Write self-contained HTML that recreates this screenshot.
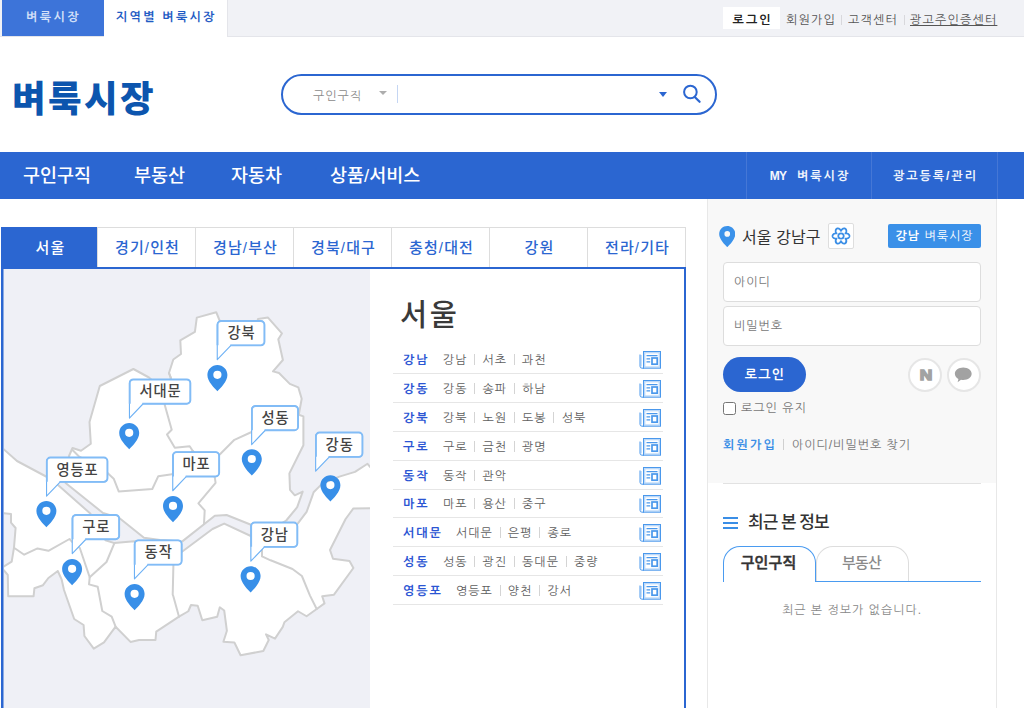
<!DOCTYPE html>
<html lang="ko">
<head>
<meta charset="utf-8">
<title>벼룩시장</title>
<style>
*{box-sizing:border-box;margin:0;padding:0}
html,body{width:1024px;height:708px;overflow:hidden;background:#fff}
body{font-family:"Liberation Sans","NanumGothic","Noto Sans CJK KR",sans-serif;font-size:12px;color:#333;position:relative}
.noto{font-family:"Liberation Sans","Noto Sans CJK KR",sans-serif}
.abs{position:absolute}
/* top bar */
#topbar{position:absolute;left:0;top:0;width:1024px;height:37px;background:#f1f2f6;border-bottom:1px solid #e4e5ea}
#topbar .t1{position:absolute;left:2px;top:0;width:102px;height:36px;background:#3d74d9;color:#d4e0f8;font-size:12px;font-weight:bold;line-height:35px;letter-spacing:2.5px;padding-left:24px;white-space:nowrap}
#topbar .t2{position:absolute;left:104px;top:0;width:124px;height:37px;border-right:1px solid #e4e5ea;background:#fff;color:#1f5bc4;font-size:12px;font-weight:bold;line-height:35px;letter-spacing:2.3px;padding-left:12px;white-space:nowrap}
#topbar .login{position:absolute;left:723px;top:7px;width:57px;height:22px;background:#fff;color:#222;font-weight:bold;font-size:12px;line-height:26px;letter-spacing:2.1px;padding-left:9.5px;white-space:nowrap}
#topbar .lnk{position:absolute;top:9px;height:22px;line-height:22px;font-size:12px;color:#555;white-space:nowrap;letter-spacing:1.2px}
#topbar .dv{position:absolute;top:15px;width:1px;height:10px;background:#d8d8dc}
/* header */
#logo{position:absolute;left:12px;top:72px;font-family:"Liberation Sans","Noto Sans CJK KR",sans-serif;font-weight:900;font-size:36.5px;line-height:56px;color:#0c55ae;letter-spacing:2.4px;white-space:nowrap}
#search{position:absolute;left:281px;top:74px;width:436px;height:41px;border:2px solid #2b66d1;border-radius:21px;background:#fff}
/* nav */
#nav{position:absolute;left:0;top:152px;width:1024px;height:47px;background:#2b66d1}
#nav .m{position:absolute;top:0;height:47px;line-height:48px;color:#fff;font-family:"Liberation Sans","Noto Sans CJK KR",sans-serif;font-size:18.5px;font-weight:500;white-space:nowrap;letter-spacing:0px}
#nav .r{position:absolute;top:0;height:47px;line-height:48px;color:#f2f6fd;font-size:12px;font-weight:bold;text-align:center;border-left:1px solid #4577d6;letter-spacing:2px;padding-left:2px;white-space:nowrap}

/* region tabs */
#rtabs{position:absolute;left:1px;top:227px;width:685px;height:42px;border-bottom:2px solid #2b66d1}
#rtabs .t{position:absolute;top:0;height:40px;line-height:40px;text-align:center;font-family:"Liberation Sans","Noto Sans CJK KR",sans-serif;font-size:15px;font-weight:500;color:#2b66d1;background:#fff;border:1px solid #ddd;border-bottom:none;letter-spacing:1.1px;padding-left:2px}
#rtabs .t.on{background:#2b66d1;color:#fff;border-color:#2b66d1}
#panel{position:absolute;left:1px;top:267px;width:685px;height:460px;border:2px solid #2b66d1;background:#fff}
#map{position:absolute;left:3px;top:269px;width:367px;height:439px;background:#eff0f6;overflow:hidden;border-left:1px solid #8dabe3}
#rlist h2{position:absolute;left:400px;top:293px;font-family:"Liberation Sans","Noto Sans CJK KR",sans-serif;font-size:29.5px;font-weight:500;color:#3a3a3a;line-height:44px;letter-spacing:2.5px}
.row{position:absolute;left:393px;width:270px;height:29px;border-bottom:1px solid #e6e6e6;line-height:30px;font-size:12px;color:#5e5e5e;white-space:nowrap;letter-spacing:1px}
.row b{position:absolute;left:10px;top:0;color:#2b55d3;font-weight:bold;letter-spacing:2px}
.row span.s{position:absolute;top:0}
.row i{display:inline-block;width:1px;height:11px;background:#d4d4d4;margin:0 7.2px 0 6.8px;vertical-align:-1px;font-size:0;overflow:hidden}
.row svg{position:absolute;right:2px;top:6px}
/* sidebar */
#side{position:absolute;left:707px;top:199px;width:290px;height:520px;border:1px solid #e8e8e8;border-top:none;background:#fff}
#side>*{margin-left:-1px}
#side .g{margin-left:0;position:absolute;left:0;top:0;width:288px;height:284px;background:#f8f8f8}

#search .sel{position:absolute;left:30px;top:0;height:37px;line-height:40px;font-size:12px;color:#8a8a8a;white-space:nowrap;letter-spacing:1px}
#search .car1{position:absolute;left:96px;top:15.200px;width:0;height:0;border-left:4.200px solid transparent;border-right:4.200px solid transparent;border-top:4.700px solid #adadad}
#search .bar{position:absolute;left:114px;top:9px;width:1px;height:18px;background:#c5d6f3}
#search .car2{position:absolute;left:375.5px;top:16px;width:0;height:0;border-left:4px solid transparent;border-right:4px solid transparent;border-top:5px solid #2b66d1}
#search svg{position:absolute;left:398px;top:8px}
#side .loc{position:absolute;left:35px;top:27px;font-family:"Liberation Sans","Noto Sans CJK KR",sans-serif;font-size:16px;line-height:24px;color:#333;white-space:nowrap;letter-spacing:0.1px}
#side .gear{position:absolute;left:121px;top:24px;width:26px;height:26px;border:1px solid #dedede;border-radius:2px;background:#fff}
#side .gbtn{position:absolute;left:181px;top:25px;width:93px;height:24px;background:#3a90e8;border-radius:2px;color:#fff;font-size:12px;line-height:24px;text-align:center;white-space:nowrap;letter-spacing:1px}
#side .inp{position:absolute;left:16px;width:258px;height:40px;border:1px solid #ddd;border-radius:4px;background:#fff;font-size:12px;line-height:38px;color:#777;padding-left:10px;letter-spacing:1px}
#side .lbtn{position:absolute;left:16px;top:158px;width:83px;height:35px;border-radius:18px;background:#2b66d1;color:#fff;font-size:13px;font-weight:bold;line-height:36px;text-align:center;letter-spacing:1.2px;padding-left:1px}
#side .circ{position:absolute;top:158.5px;width:34px;height:34px;border-radius:50%;background:#fff;border:2px solid #e6e6e6}
#side .circ b{position:absolute;left:1px;top:0;width:30px;height:30px;line-height:29.5px;text-align:center;font-family:"Liberation Sans",sans-serif;font-weight:bold;font-size:15.5px;color:#a2a2a2;-webkit-text-stroke:1.5px #a2a2a2;transform:scaleX(1.12)}
#side .chk{position:absolute;left:16px;top:203px;width:13px;height:13px;border:1px solid #767676;border-radius:2.5px;background:#fff}
#side .keep{position:absolute;left:34px;top:199px;line-height:20px;font-size:12px;color:#777;letter-spacing:1px;white-space:nowrap}
#side .links{position:absolute;left:16px;top:236px;line-height:20px;font-size:12px;color:#777;letter-spacing:1px;white-space:nowrap}
#side .links b{color:#3a8ee6;letter-spacing:2.2px}
#side .links i{display:inline-block;width:1px;height:11px;background:#d0d0d0;margin:0 8px 0 6px;vertical-align:-1px;font-size:0;overflow:hidden}
#side .hr{position:absolute;left:16px;top:284px;width:258px;height:1px;background:#e2e2e2}
#side .ham{position:absolute;left:16px;top:318px;width:15px;height:12.400px;border-top:2px solid #3a8ee6;border-bottom:2px solid #3a8ee6}
#side .ham:after{content:"";position:absolute;left:0;top:3.200px;width:15px;height:2px;background:#3a8ee6}
#side .rt{position:absolute;left:41px;top:311px;font-family:"Liberation Sans","Noto Sans CJK KR",sans-serif;font-size:17px;font-weight:500;line-height:26px;color:#333;white-space:nowrap;letter-spacing:-1px}
#side .tb{position:absolute;top:347px;height:36px;border:1px solid #ddd;border-bottom:none;border-radius:17px 17px 0 0;font-family:"Liberation Sans","Noto Sans CJK KR",sans-serif;font-size:15px;font-weight:500;line-height:32px;text-align:center;color:#8a8a8a;background:#fff;letter-spacing:-0.8px;padding-right:2px}
#side .tb.on{border-color:#4a9bf0;color:#333;font-weight:500;-webkit-text-stroke:0.45px #333;letter-spacing:0.1px;padding-right:2px}
#side .tline{position:absolute;left:109px;top:382px;width:165px;height:1px;background:#4a9bf0}
#side .none{position:absolute;left:16px;top:401px;width:258px;text-align:center;font-size:12px;line-height:20px;color:#888;letter-spacing:1px}
</style>
</head>
<body>
<div id="topbar">
  <div class="t1">벼룩시장</div>
  <div class="t2">지역별 벼룩시장</div>
  <div class="login">로그인</div>
  <div class="lnk" style="left:786px">회원가입</div><div class="dv" style="left:841px"></div>
  <div class="lnk" style="left:848px">고객센터</div><div class="dv" style="left:904px"></div>
  <div class="lnk" style="left:910px;text-decoration:underline">광고주인증센터</div>
</div>
<div id="logo">벼룩시장</div>
<div id="search">
  <div class="sel">구인구직</div><div class="car1"></div><div class="bar"></div><div class="car2"></div>
  <svg width="24" height="24" viewBox="0 0 24 24"><circle cx="9.4" cy="8" r="6.3" fill="none" stroke="#2b66d1" stroke-width="2"/><path d="M14 13.200L18.600 17.800" stroke="#2b66d1" stroke-width="2.200" stroke-linecap="round"/></svg>
</div>
<div id="nav">
  <div class="m" style="left:23px">구인구직</div>
  <div class="m" style="left:134px">부동산</div>
  <div class="m" style="left:231px">자동차</div>
  <div class="m" style="left:330px">상품/서비스</div>
  <div class="r" style="left:746px;width:125px"><span style="letter-spacing:-0.8px;font-size:12px;margin-right:5.500px">MY</span> 벼룩시장</div>
  <div class="r" style="left:871px;width:126px">광고등록/관리</div>
  <div class="r" style="left:997px;width:27px"></div>
</div>
<div id="rtabs">
  <div class="t on" style="left:0px;width:97px">서울</div>
  <div class="t" style="left:96px;width:99px">경기/인천</div>
  <div class="t" style="left:194px;width:99px">경남/부산</div>
  <div class="t" style="left:292px;width:99px">경북/대구</div>
  <div class="t" style="left:390px;width:99px">충청/대전</div>
  <div class="t" style="left:488px;width:99px">강원</div>
  <div class="t" style="left:586px;width:99px">전라/기타</div>
</div>
<div id="panel"></div>
<div id="map">
<svg id="mapsvg" width="366" height="439" viewBox="4 269 366 439" style="position:absolute;left:0;top:0">
<g fill="#fff" stroke="#d0d0d0" stroke-width="2" stroke-linejoin="round">
<polygon points="72.5,448 81,450.8 90.8,443.8 89.5,422 99.8,386 133.4,369 149,377.5 155,383 168,383 171,378.3 169,373 173.3,359.5 181,354 180.3,340.3 194.9,331.8 196.8,317.6 216.2,312.2 219.6,320.5 222,327 256,327 258,319 268,317.6 281.9,333.4 278.3,339.3 282.9,360 273,371.4 279,373 289.8,383.9 298.3,387.4 301.7,398.7 298.75,414.8 303.4,416.4 303.4,445.3 289.4,473.4 290,489.8 294.8,495.3 302.7,491.6 297.2,507.2 286.25,520.5 270,530 251.6,525 226.6,515 214.8,515.8 182,541.6 160,540 144,537.7 119.3,518 103,513 65.6,483 69,456"/>
<polygon points="0,446 17,461 47,477 57.7,484.8 90.3,513.5 105.5,540.2 114.4,543.1 134.2,541.2 160,551 182,551.7 212.5,529 224.2,523.6 250.8,536 280,535 297.7,523.6 306.6,511.9 312.8,494.7 313.6,492.2 322.2,483.6 339.4,476.6 355,471.9 367.5,463.75 370,467 380,467 380,508 353.4,508.4 345.6,519 330,550 333,558.75 349.5,561 353.4,568 334,594.7 322.2,596.25 324.5,603.4 316.7,609 306.6,616.25 298,611.25 284.4,622.2 282.8,626.9 275,638.6 266,634.4 268.75,640 263.3,651 240.6,655.3 234.4,642.5 223.4,641.7 226.9,630.8 224.2,610.5 219.8,607.3 217.2,616.7 202.3,620.3 197.7,605.8 191,605 188.3,611.25 179,616.7 156.25,631.6 155.5,640 139,640 130.5,641.9 115.6,626.7 104,642.3 93.75,648.6 84.4,636 83.6,625 74.2,619 64,590 61.7,579.7 57.8,571 48.4,578 43,585.2 34.4,588.3 33.6,596.25 8.2,596.25 7.8,575 4,570.3 -4,570 -4,566.4 4,566.4 11.7,561.7 14,547.7 15.6,528 11,522.7 11,514 4,513.3 -4,513"/>
</g>
<g fill="none" stroke="#d0d0d0" stroke-width="2" stroke-linejoin="round" stroke-linecap="round">
<polyline points="169,373 171,378.3 164.7,404.8 171.7,429.8 167,434.5 174.8,447.8 189.7,446.25 192.8,451 205,465"/>
<polyline points="205,465 219.5,454.7 234.4,439.8 251.6,432 298.75,414.8"/>
<polyline points="205,465 214.8,477.3 215.6,482.8 198.4,503.3 204.7,510.3 204,524"/>
<polyline points="72.5,450 78.5,456 107.8,473.2 113.7,478.7 118.7,491.4 152.3,489 158.3,476.2 172,474.2 192.8,451"/>
<polyline points="14,547.7 24.2,554.7 37.5,548.4 48.4,550.8 69.5,539 71.9,541.6 79.8,548 89.7,577.3 89,584.4 97.7,586.7 102.3,611 111.7,616.6 115.6,626.7"/>
<polyline points="114.4,543.1 106.5,562 89.7,577.3"/>
<polyline points="180,552.5 173.4,565 172.7,594.7 173.4,596.4 179,616.7"/>
<polyline points="262,540 262,556.4 270.6,560.3 292.5,569 301.9,576 310,595.6 316.7,609"/>
</g>
<g fill="#388fe8">
<path transform="translate(207.4 365)" fill-rule="evenodd" d="M10 0C4.5 0 0 4.4 0 9.9c0 3.2 1.6 6.3 4 9.6 2.2 3 4.8 5.6 6 6.7 1.2-1.1 3.800-3.700 6-6.700 2.400-3.300 4-6.400 4-9.600C20 4.400 15.500 0 10 0zm0 5.700a4.100 4.100 0 1 1 0 8.200 4.100 4.100 0 0 1 0-8.200z"/>
<path transform="translate(119.2 423)" fill-rule="evenodd" d="M10 0C4.5 0 0 4.4 0 9.9c0 3.2 1.6 6.3 4 9.6 2.2 3 4.8 5.6 6 6.7 1.2-1.1 3.800-3.700 6-6.700 2.400-3.300 4-6.400 4-9.600C20 4.400 15.500 0 10 0zm0 5.700a4.100 4.100 0 1 1 0 8.200 4.100 4.100 0 0 1 0-8.200z"/>
<path transform="translate(241.8 449.2)" fill-rule="evenodd" d="M10 0C4.5 0 0 4.4 0 9.9c0 3.2 1.6 6.3 4 9.6 2.2 3 4.8 5.6 6 6.7 1.2-1.1 3.800-3.700 6-6.700 2.400-3.300 4-6.400 4-9.600C20 4.400 15.500 0 10 0zm0 5.700a4.100 4.100 0 1 1 0 8.200 4.100 4.100 0 0 1 0-8.200z"/>
<path transform="translate(320.4 475.3)" fill-rule="evenodd" d="M10 0C4.5 0 0 4.4 0 9.9c0 3.2 1.6 6.3 4 9.6 2.2 3 4.8 5.6 6 6.7 1.2-1.1 3.800-3.700 6-6.700 2.400-3.300 4-6.400 4-9.600C20 4.400 15.500 0 10 0zm0 5.700a4.100 4.100 0 1 1 0 8.200 4.100 4.100 0 0 1 0-8.200z"/>
<path transform="translate(36.4 501)" fill-rule="evenodd" d="M10 0C4.5 0 0 4.4 0 9.9c0 3.2 1.6 6.3 4 9.6 2.2 3 4.8 5.6 6 6.7 1.2-1.1 3.800-3.700 6-6.700 2.400-3.300 4-6.400 4-9.600C20 4.400 15.500 0 10 0zm0 5.700a4.100 4.100 0 1 1 0 8.200 4.100 4.100 0 0 1 0-8.200z"/>
<path transform="translate(163 496.1)" fill-rule="evenodd" d="M10 0C4.5 0 0 4.4 0 9.9c0 3.2 1.6 6.3 4 9.6 2.2 3 4.8 5.6 6 6.7 1.2-1.1 3.800-3.700 6-6.700 2.400-3.300 4-6.400 4-9.600C20 4.400 15.500 0 10 0zm0 5.700a4.100 4.100 0 1 1 0 8.200 4.100 4.100 0 0 1 0-8.200z"/>
<path transform="translate(62.1 559)" fill-rule="evenodd" d="M10 0C4.5 0 0 4.4 0 9.9c0 3.2 1.6 6.3 4 9.6 2.2 3 4.8 5.6 6 6.7 1.2-1.1 3.800-3.700 6-6.700 2.400-3.300 4-6.400 4-9.600C20 4.400 15.500 0 10 0zm0 5.700a4.100 4.100 0 1 1 0 8.200 4.100 4.100 0 0 1 0-8.200z"/>
<path transform="translate(124.6 584)" fill-rule="evenodd" d="M10 0C4.5 0 0 4.4 0 9.9c0 3.2 1.6 6.3 4 9.6 2.2 3 4.8 5.6 6 6.7 1.2-1.1 3.800-3.700 6-6.700 2.400-3.300 4-6.400 4-9.600C20 4.400 15.500 0 10 0zm0 5.700a4.100 4.100 0 1 1 0 8.200 4.100 4.100 0 0 1 0-8.200z"/>
<path transform="translate(240.6 566.2)" fill-rule="evenodd" d="M10 0C4.5 0 0 4.4 0 9.9c0 3.2 1.6 6.3 4 9.6 2.2 3 4.8 5.6 6 6.7 1.2-1.1 3.800-3.700 6-6.700 2.400-3.300 4-6.400 4-9.600C20 4.400 15.500 0 10 0zm0 5.700a4.100 4.100 0 1 1 0 8.200 4.100 4.100 0 0 1 0-8.200z"/>
</g>
<g font-family="'Liberation Sans','Noto Sans CJK KR',sans-serif" font-size="14.300" font-weight="500" fill="#444" text-anchor="middle" letter-spacing="0.9">
<path d="M221.15 321.05H260.85a3.6 3.6 0 0 1 3.6 3.6V341.75a3.6 3.6 0 0 1 -3.6 3.6H230.95L217.25 359.65V324.65a3.6 3.6 0 0 1 3.6 -3.6z" fill="#fff" stroke="#6db1f5" stroke-width="1.1" stroke-linejoin="round"/>
<path d="M230.15 345.35H260.85a3.6 3.6 0 0 0 3.6 -3.6V324.65a3.6 3.6 0 0 0 -3.6 -3.6H221.15a3.6 3.6 0 0 0 -3.6 3.6V345.35" fill="none" stroke="#82bcf6" stroke-width="1.9"/>
<text x="241.45" y="338">강북</text>
<path d="M133.35 379.45H186.75a3.6 3.6 0 0 1 3.6 3.6V400.15a3.6 3.6 0 0 1 -3.6 3.6H143.15L129.45 418.05V383.05a3.6 3.6 0 0 1 3.6 -3.6z" fill="#fff" stroke="#6db1f5" stroke-width="1.1" stroke-linejoin="round"/>
<path d="M142.35 403.75H186.75a3.6 3.6 0 0 0 3.6 -3.6V383.05a3.6 3.6 0 0 0 -3.6 -3.6H133.35a3.6 3.6 0 0 0 -3.6 3.6V403.75" fill="none" stroke="#82bcf6" stroke-width="1.9"/>
<text x="160.5" y="396.4">서대문</text>
<path d="M255.55 405.95H294.45a3.6 3.6 0 0 1 3.6 3.6V426.65a3.6 3.6 0 0 1 -3.6 3.6H265.35L251.65 444.55V409.55a3.6 3.6 0 0 1 3.6 -3.6z" fill="#fff" stroke="#6db1f5" stroke-width="1.1" stroke-linejoin="round"/>
<path d="M264.55 430.25H294.45a3.6 3.6 0 0 0 3.6 -3.6V409.55a3.6 3.6 0 0 0 -3.6 -3.6H255.55a3.6 3.6 0 0 0 -3.6 3.6V430.25" fill="none" stroke="#82bcf6" stroke-width="1.9"/>
<text x="275.45" y="422.9">성동</text>
<path d="M319.55 432.55H358.85a3.6 3.6 0 0 1 3.6 3.6V453.25a3.6 3.6 0 0 1 -3.6 3.6H329.35L315.65 471.15V436.15a3.6 3.6 0 0 1 3.6 -3.6z" fill="#fff" stroke="#6db1f5" stroke-width="1.1" stroke-linejoin="round"/>
<path d="M328.55 456.85H358.85a3.6 3.6 0 0 0 3.6 -3.6V436.15a3.6 3.6 0 0 0 -3.6 -3.6H319.55a3.6 3.6 0 0 0 -3.6 3.6V456.85" fill="none" stroke="#82bcf6" stroke-width="1.9"/>
<text x="339.65" y="449.5">강동</text>
<path d="M50.45 457.55H103.85a3.6 3.6 0 0 1 3.6 3.6V478.25a3.6 3.6 0 0 1 -3.6 3.6H60.25L46.55 496.15V461.15a3.6 3.6 0 0 1 3.6 -3.6z" fill="#fff" stroke="#6db1f5" stroke-width="1.1" stroke-linejoin="round"/>
<path d="M59.45 481.85H103.85a3.6 3.6 0 0 0 3.6 -3.6V461.15a3.6 3.6 0 0 0 -3.6 -3.6H50.45a3.6 3.6 0 0 0 -3.6 3.6V481.85" fill="none" stroke="#82bcf6" stroke-width="1.9"/>
<text x="77.6" y="474.5">영등포</text>
<path d="M176.65 452.15H215.55a3.6 3.6 0 0 1 3.6 3.6V472.85a3.6 3.6 0 0 1 -3.6 3.6H186.45L172.75 490.75V455.75a3.6 3.6 0 0 1 3.6 -3.6z" fill="#fff" stroke="#6db1f5" stroke-width="1.1" stroke-linejoin="round"/>
<path d="M185.65 476.45H215.55a3.6 3.6 0 0 0 3.6 -3.6V455.75a3.6 3.6 0 0 0 -3.6 -3.6H176.65a3.6 3.6 0 0 0 -3.6 3.6V476.45" fill="none" stroke="#82bcf6" stroke-width="1.9"/>
<text x="196.55" y="469.1">마포</text>
<path d="M76.15 514.95H115.55a3.6 3.6 0 0 1 3.6 3.6V535.65a3.6 3.6 0 0 1 -3.6 3.6H85.95L72.25 553.55V518.55a3.6 3.6 0 0 1 3.6 -3.6z" fill="#fff" stroke="#6db1f5" stroke-width="1.1" stroke-linejoin="round"/>
<path d="M85.15 539.25H115.55a3.6 3.6 0 0 0 3.6 -3.6V518.55a3.6 3.6 0 0 0 -3.6 -3.6H76.15a3.6 3.6 0 0 0 -3.6 3.6V539.25" fill="none" stroke="#82bcf6" stroke-width="1.9"/>
<text x="96.3" y="531.9">구로</text>
<path d="M138.35 540.35H178.05a3.6 3.6 0 0 1 3.6 3.6V561.05a3.6 3.6 0 0 1 -3.6 3.6H148.15L134.45 578.95V543.95a3.6 3.6 0 0 1 3.6 -3.6z" fill="#fff" stroke="#6db1f5" stroke-width="1.1" stroke-linejoin="round"/>
<path d="M147.35 564.65H178.05a3.6 3.6 0 0 0 3.6 -3.6V543.95a3.6 3.6 0 0 0 -3.6 -3.6H138.35a3.6 3.6 0 0 0 -3.6 3.6V564.65" fill="none" stroke="#82bcf6" stroke-width="1.9"/>
<text x="158.65" y="557.3">동작</text>
<path d="M254.75 522.55H293.75a3.6 3.6 0 0 1 3.6 3.6V543.25a3.6 3.6 0 0 1 -3.6 3.6H264.55L250.85 561.15V526.15a3.6 3.6 0 0 1 3.6 -3.6z" fill="#fff" stroke="#6db1f5" stroke-width="1.1" stroke-linejoin="round"/>
<path d="M263.75 546.85H293.75a3.6 3.6 0 0 0 3.6 -3.6V526.15a3.6 3.6 0 0 0 -3.6 -3.6H254.75a3.6 3.6 0 0 0 -3.6 3.6V546.85" fill="none" stroke="#82bcf6" stroke-width="1.9"/>
<text x="274.7" y="539.5">강남</text>
</g>
</svg>
</div>
<div id="rlist">
<h2>서울</h2>
<div class="row" style="top:345px"><b>강남</b><span class="s" style="left:50px">강남<i>|</i>서초<i>|</i>과천</span><svg width="22" height="18" viewBox="0 0 22 18"><g fill="none"><rect x="5.700" y="1.700" width="14.600" height="14.300" stroke="#b9d8f9" stroke-width="1.300"/><path d="M2.200 4V15.500" stroke="#b9d8f9" stroke-width="1.200"/><g stroke="#4a98ec"><rect x="4.500" y="0.500" width="17" height="16.700" stroke-width="1"/><path d="M1 3.500V15.200Q1 17.200 3 17.200H5" stroke-width="1"/><path d="M7.500 4.700H18.500M7.500 7.800H11.200M7.500 10.800H11.200" stroke-width="1.300"/><rect x="13" y="7" width="5.200" height="6.200" stroke-width="1.700"/></g></g></svg></div>
<div class="row" style="top:374px"><b>강동</b><span class="s" style="left:50px">강동<i>|</i>송파<i>|</i>하남</span><svg width="22" height="18" viewBox="0 0 22 18"><g fill="none"><rect x="5.700" y="1.700" width="14.600" height="14.300" stroke="#b9d8f9" stroke-width="1.300"/><path d="M2.200 4V15.500" stroke="#b9d8f9" stroke-width="1.200"/><g stroke="#4a98ec"><rect x="4.500" y="0.500" width="17" height="16.700" stroke-width="1"/><path d="M1 3.500V15.200Q1 17.200 3 17.200H5" stroke-width="1"/><path d="M7.500 4.700H18.500M7.500 7.800H11.200M7.500 10.800H11.200" stroke-width="1.300"/><rect x="13" y="7" width="5.200" height="6.200" stroke-width="1.700"/></g></g></svg></div>
<div class="row" style="top:403px"><b>강북</b><span class="s" style="left:50px">강북<i>|</i>노원<i>|</i>도봉<i>|</i>성북</span><svg width="22" height="18" viewBox="0 0 22 18"><g fill="none"><rect x="5.700" y="1.700" width="14.600" height="14.300" stroke="#b9d8f9" stroke-width="1.300"/><path d="M2.200 4V15.500" stroke="#b9d8f9" stroke-width="1.200"/><g stroke="#4a98ec"><rect x="4.500" y="0.500" width="17" height="16.700" stroke-width="1"/><path d="M1 3.500V15.200Q1 17.200 3 17.200H5" stroke-width="1"/><path d="M7.500 4.700H18.500M7.500 7.800H11.200M7.500 10.800H11.200" stroke-width="1.300"/><rect x="13" y="7" width="5.200" height="6.200" stroke-width="1.700"/></g></g></svg></div>
<div class="row" style="top:432px"><b>구로</b><span class="s" style="left:50px">구로<i>|</i>금천<i>|</i>광명</span><svg width="22" height="18" viewBox="0 0 22 18"><g fill="none"><rect x="5.700" y="1.700" width="14.600" height="14.300" stroke="#b9d8f9" stroke-width="1.300"/><path d="M2.200 4V15.500" stroke="#b9d8f9" stroke-width="1.200"/><g stroke="#4a98ec"><rect x="4.500" y="0.500" width="17" height="16.700" stroke-width="1"/><path d="M1 3.500V15.200Q1 17.200 3 17.200H5" stroke-width="1"/><path d="M7.500 4.700H18.500M7.500 7.800H11.200M7.500 10.800H11.200" stroke-width="1.300"/><rect x="13" y="7" width="5.200" height="6.200" stroke-width="1.700"/></g></g></svg></div>
<div class="row" style="top:461px"><b>동작</b><span class="s" style="left:50px">동작<i>|</i>관악</span><svg width="22" height="18" viewBox="0 0 22 18"><g fill="none"><rect x="5.700" y="1.700" width="14.600" height="14.300" stroke="#b9d8f9" stroke-width="1.300"/><path d="M2.200 4V15.500" stroke="#b9d8f9" stroke-width="1.200"/><g stroke="#4a98ec"><rect x="4.500" y="0.500" width="17" height="16.700" stroke-width="1"/><path d="M1 3.500V15.200Q1 17.200 3 17.200H5" stroke-width="1"/><path d="M7.500 4.700H18.500M7.500 7.800H11.200M7.500 10.800H11.200" stroke-width="1.300"/><rect x="13" y="7" width="5.200" height="6.200" stroke-width="1.700"/></g></g></svg></div>
<div class="row" style="top:489px"><b>마포</b><span class="s" style="left:50px">마포<i>|</i>용산<i>|</i>중구</span><svg width="22" height="18" viewBox="0 0 22 18"><g fill="none"><rect x="5.700" y="1.700" width="14.600" height="14.300" stroke="#b9d8f9" stroke-width="1.300"/><path d="M2.200 4V15.500" stroke="#b9d8f9" stroke-width="1.200"/><g stroke="#4a98ec"><rect x="4.500" y="0.500" width="17" height="16.700" stroke-width="1"/><path d="M1 3.500V15.200Q1 17.200 3 17.200H5" stroke-width="1"/><path d="M7.500 4.700H18.500M7.500 7.800H11.200M7.500 10.800H11.200" stroke-width="1.300"/><rect x="13" y="7" width="5.200" height="6.200" stroke-width="1.700"/></g></g></svg></div>
<div class="row" style="top:518px"><b>서대문</b><span class="s" style="left:63px">서대문<i>|</i>은평<i>|</i>종로</span><svg width="22" height="18" viewBox="0 0 22 18"><g fill="none"><rect x="5.700" y="1.700" width="14.600" height="14.300" stroke="#b9d8f9" stroke-width="1.300"/><path d="M2.200 4V15.500" stroke="#b9d8f9" stroke-width="1.200"/><g stroke="#4a98ec"><rect x="4.500" y="0.500" width="17" height="16.700" stroke-width="1"/><path d="M1 3.500V15.200Q1 17.200 3 17.200H5" stroke-width="1"/><path d="M7.500 4.700H18.500M7.500 7.800H11.200M7.500 10.800H11.200" stroke-width="1.300"/><rect x="13" y="7" width="5.200" height="6.200" stroke-width="1.700"/></g></g></svg></div>
<div class="row" style="top:547px"><b>성동</b><span class="s" style="left:50px">성동<i>|</i>광진<i>|</i>동대문<i>|</i>중량</span><svg width="22" height="18" viewBox="0 0 22 18"><g fill="none"><rect x="5.700" y="1.700" width="14.600" height="14.300" stroke="#b9d8f9" stroke-width="1.300"/><path d="M2.200 4V15.500" stroke="#b9d8f9" stroke-width="1.200"/><g stroke="#4a98ec"><rect x="4.500" y="0.500" width="17" height="16.700" stroke-width="1"/><path d="M1 3.500V15.200Q1 17.200 3 17.200H5" stroke-width="1"/><path d="M7.500 4.700H18.500M7.500 7.800H11.200M7.500 10.800H11.200" stroke-width="1.300"/><rect x="13" y="7" width="5.200" height="6.200" stroke-width="1.700"/></g></g></svg></div>
<div class="row" style="top:576px"><b>영등포</b><span class="s" style="left:63px">영등포<i>|</i>양천<i>|</i>강서</span><svg width="22" height="18" viewBox="0 0 22 18"><g fill="none"><rect x="5.700" y="1.700" width="14.600" height="14.300" stroke="#b9d8f9" stroke-width="1.300"/><path d="M2.200 4V15.500" stroke="#b9d8f9" stroke-width="1.200"/><g stroke="#4a98ec"><rect x="4.500" y="0.500" width="17" height="16.700" stroke-width="1"/><path d="M1 3.500V15.200Q1 17.200 3 17.200H5" stroke-width="1"/><path d="M7.500 4.700H18.500M7.500 7.800H11.200M7.500 10.800H11.200" stroke-width="1.300"/><rect x="13" y="7" width="5.200" height="6.200" stroke-width="1.700"/></g></g></svg></div>
</div>
<div id="side"><div class="g"></div>
  <svg style="position:absolute;left:11.500px;top:26.600px" width="16.500" height="21" viewBox="0 0 20 26"><path fill="#3b92ea" fill-rule="evenodd" d="M10 0C4.500 0 0 4.400 0 9.900c0 3.200 1.600 6.300 4 9.600 2.200 3 4.800 5.600 6 6.700 1.200-1.100 3.800-3.700 6-6.700 2.400-3.300 4-6.400 4-9.600C20 4.400 15.500 0 10 0zm0 6.300a3.500 3.500 0 1 1 0 7 3.500 3.500 0 0 1 0-7z"/></svg>
  <div class="loc">서울 강남구</div>
  <div class="gear"><svg style="position:absolute;left:0;top:-0.5px" width="24" height="24" viewBox="-12 -12 24 24"><g fill="none" stroke="#3a8ee6" stroke-width="1.800" stroke-linejoin="round"><circle r="2.700"/><path d="M8.45 0.00 L8.40 0.44 L8.26 0.87 L8.02 1.27 L7.70 1.64 L7.30 1.95 L6.83 2.22 L6.30 2.42 L5.72 2.55 L5.11 2.60 L4.42 2.55 L4.81 3.12 L5.07 3.68 L5.24 4.25 L5.33 4.80 L5.34 5.34 L5.26 5.85 L5.11 6.31 L4.88 6.72 L4.58 7.06 L4.23 7.32 L3.82 7.50 L3.38 7.58 L2.91 7.58 L2.43 7.48 L1.95 7.30 L1.49 7.02 L1.06 6.66 L0.65 6.23 L0.30 5.72 L0.00 5.10 L-0.30 5.72 L-0.65 6.23 L-1.06 6.66 L-1.49 7.02 L-1.95 7.30 L-2.43 7.48 L-2.91 7.58 L-3.38 7.58 L-3.82 7.50 L-4.22 7.32 L-4.58 7.06 L-4.88 6.72 L-5.11 6.31 L-5.26 5.85 L-5.34 5.34 L-5.33 4.80 L-5.24 4.25 L-5.07 3.68 L-4.81 3.12 L-4.42 2.55 L-5.11 2.60 L-5.72 2.55 L-6.30 2.42 L-6.83 2.22 L-7.30 1.95 L-7.70 1.64 L-8.02 1.27 L-8.26 0.87 L-8.40 0.44 L-8.45 0.00 L-8.40 -0.44 L-8.26 -0.87 L-8.02 -1.27 L-7.70 -1.64 L-7.30 -1.95 L-6.83 -2.22 L-6.30 -2.42 L-5.72 -2.55 L-5.11 -2.60 L-4.42 -2.55 L-4.81 -3.12 L-5.07 -3.68 L-5.24 -4.25 L-5.33 -4.80 L-5.34 -5.34 L-5.26 -5.85 L-5.11 -6.31 L-4.88 -6.72 L-4.58 -7.06 L-4.23 -7.32 L-3.82 -7.50 L-3.38 -7.58 L-2.91 -7.58 L-2.43 -7.48 L-1.95 -7.30 L-1.49 -7.02 L-1.06 -6.66 L-0.65 -6.23 L-0.30 -5.72 L-0.00 -5.10 L0.30 -5.72 L0.65 -6.23 L1.06 -6.66 L1.49 -7.02 L1.95 -7.30 L2.43 -7.48 L2.91 -7.58 L3.38 -7.58 L3.82 -7.50 L4.23 -7.32 L4.58 -7.06 L4.88 -6.72 L5.11 -6.31 L5.26 -5.85 L5.34 -5.34 L5.33 -4.80 L5.24 -4.25 L5.07 -3.68 L4.81 -3.12 L4.42 -2.55 L5.11 -2.60 L5.72 -2.55 L6.30 -2.42 L6.83 -2.22 L7.30 -1.95 L7.70 -1.64 L8.02 -1.27 L8.26 -0.87 L8.40 -0.44Z"/></g></svg></div>
  <div class="gbtn"><b>강남</b> 벼룩시장</div>
  <div class="inp" style="top:63px">아이디</div>
  <div class="inp" style="top:107px">비밀번호</div>
  <div class="lbtn">로그인</div>
  <div class="circ" style="left:200.5px"><b>N</b></div>
  <div class="circ" style="left:239.5px"><svg style="position:absolute;left:5.800px;top:7.800px" width="18.500" height="16.400" viewBox="0 0 18 16"><path fill="#a2a2a2" d="M9 0.500C4.400 0.500 0.800 3.200 0.800 6.600c0 2.100 1.400 3.900 3.500 5L3.500 14.800l3.300-2.300c0.700 0.100 1.400 0.200 2.200 0.200 4.600 0 8.200-2.700 8.200-6.100S13.600 0.500 9 0.500z"/></svg></div>
  <div class="chk"></div><div class="keep">로그인 유지</div>
  <div class="links"><b>회원가입</b><i>|</i>아이디/비밀번호 찾기</div>
  <div class="hr"></div>
  <div class="ham"></div>
  <div class="rt">최근 본 정보</div>
  <div class="tb on" style="left:16px;width:93px">구인구직</div>
  <div class="tb" style="left:109px;width:93px">부동산</div>
  <div class="tline"></div>
  <div class="none">최근 본 정보가 없습니다.</div>
</div>
</body>
</html>
